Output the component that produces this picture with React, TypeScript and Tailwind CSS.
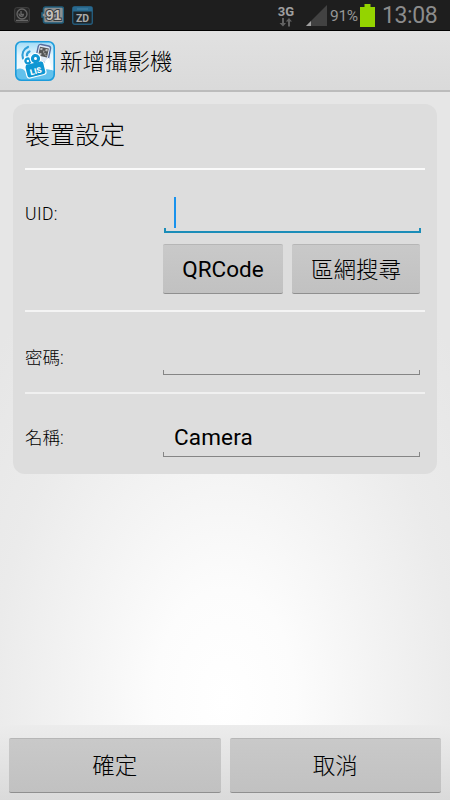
import type { ReactNode } from "react";

const ACTIONS = ["確定", "取消"];

function AppIcon() {
  return (
    <svg viewBox="0 0 40 40" className="h-10 w-10 shrink-0">
      <defs>
        <linearGradient id="sky" x1="0" y1="0" x2="0" y2="1">
          <stop offset="0" stopColor="#9fdbf7" />
          <stop offset="0.35" stopColor="#e6f6fd" />
          <stop offset="1" stopColor="#ffffff" />
        </linearGradient>
      </defs>
      <rect x="0.8" y="0.8" width="38.4" height="38.4" rx="5.5" fill="url(#sky)" />
      <path d="M1 29c3-2 6-2 9 1 5 4 8 4 13 1 5-3 11-4 16-1v5a4 4 0 0 1-4 4H5a4 4 0 0 1-4-4z" fill="#62c1ec" />
      <rect x="0.8" y="0.8" width="38.4" height="38.4" rx="5.5" fill="none" stroke="#1d9cdb" strokeWidth="1.6" />
      <g fill="none" stroke="#2f9fd8" strokeWidth="2.200" strokeLinecap="round">
        <path d="M8 17.500C6.500 12.500 8.500 8 13 6" />
        <path d="M12 15.500C11.500 13 12.500 11.500 14.500 10.500" />
      </g>
      <g transform="rotate(12 28 12)">
        <rect x="22" y="4" width="12.500" height="17" rx="2.500" fill="#dfe9f6" stroke="#586d9f" strokeWidth="1.400" />
        <rect x="23.800" y="6.500" width="9" height="9" fill="#555" />
        <path d="M24.500 7.300h2.200v2.200h-2.200zM29.800 7.300H32v2.200h-2.200zM24.500 12.500h2.200v2.200h-2.200zM28 9.500h1v2h-1zM29 12h2v1h-2zM31 13.500h1v1h-1z" fill="#bbb" />
      </g>
      <g transform="rotate(-14 20 28)">
        <g fill="#0f97d3" stroke="#fff" strokeWidth="1.200" strokeLinejoin="round">
          <path d="M29 26l6.500-5v11L29 29z" fill="#fff" />
          <rect x="10.500" y="22" width="19.500" height="13.500" rx="2.500" />
          <circle cx="15" cy="18.500" r="4.200" />
          <circle cx="23" cy="18" r="5.200" />
          <path d="M12 22h16v4H12z" stroke="none" />
        </g>
        <circle cx="15" cy="18.500" r="1.200" fill="#fff" />
        <circle cx="23" cy="18" r="1.500" fill="#fff" />
        <text x="20.300" y="33" textAnchor="middle" fontSize="8" fontWeight="900" fill="#fff" fontFamily="Roboto, sans-serif">
          LIS
        </text>
      </g>
    </svg>
  );
}

function StatusBar() {
  return (
    <div className="flex h-[31px] shrink-0 items-center border-b border-black bg-[#1e1e1e] pr-3 pl-[14px]">
      <svg viewBox="0 0 16 16" className="h-4 w-4">
        <rect x="0.700" y="0.700" width="14.600" height="14.600" rx="2" fill="#252525" stroke="#454545" />
        <circle cx="8" cy="7" r="5" fill="none" stroke="#686868" strokeWidth="1.300" />
        <path d="M7 4v3.500h3M5 6.500c0 3 3 3.500 4.500 2M2 13.500h12" fill="none" stroke="#666" strokeWidth="1.300" />
      </svg>
      <svg viewBox="0 0 23 18" className="ml-[11px] h-[18px] w-[23px]">
        <path d="M4.500 1h16a2 2 0 0 1 2 2v12a2 2 0 0 1-2 2h-16a2 2 0 0 1-2-2v-4H1V7h1.500V3a2 2 0 0 1 2-2z" fill="#8b8f91" stroke="#205e7c" strokeWidth="1.600" />
        <text x="12.500" y="13.800" textAnchor="middle" fontSize="14" fontWeight="700" fill="#c4bfba" stroke="#33383b" strokeWidth="1.800" paintOrder="stroke" fontFamily="Liberation Sans, sans-serif">
          91
        </text>
      </svg>
      <svg viewBox="0 0 21 19" className="ml-2 h-[19px] w-[21px]">
        <rect x="0.700" y="0.700" width="19.600" height="17.600" rx="2" fill="#1d2529" stroke="#245b7b" strokeWidth="1.400" />
        <path d="M1 1h19v4.500H1z" fill="#28698f" />
        <path d="M5 3h11" stroke="#4687a8" />
        <text x="10.500" y="15.500" textAnchor="middle" fontSize="10.500" fontWeight="700" fill="#aaa" fontFamily="Roboto, sans-serif">
          ZD
        </text>
      </svg>
      <div className="flex-1" />
      <div className="flex h-full w-[18px] flex-col items-center pt-[5px] text-[13px] leading-[13px] font-bold text-[#a0a0a0]">
        3G
        <svg viewBox="0 0 14 9" className="h-[9px] w-[14px] shrink-0">
          <path d="M3 0h2v5h2L4 8.500.500 5H3zM9 8.500h2v-5h2L10 0 6.800 3.500H9z" fill="#626262" />
        </svg>
      </div>
      <svg viewBox="0 0 21 21" className="ml-[11px] h-[21px] w-[21px]">
        <path d="M21 0v21H0z" fill="#424242" />
        <path d="M5 16v5H0z" fill="#a0a0a0" />
      </svg>
      <span className="ml-[3px] w-[29px] pt-px text-[15.500px] leading-5 tracking-[-0.300px] text-[#969696]">91%</span>
      <svg viewBox="0 0 15 23" className="ml-[1px] h-[23px] w-[15px]">
        <path d="M4.500 0h6v3H15v20H0V3h4.500z" fill="#94d400" />
      </svg>
      <span className="ml-[7px] w-[56px] pt-px text-[23px] leading-[30px] tracking-[-0.400px] text-[#8c8c8c]">13:08</span>
    </div>
  );
}

function Field({ value, focused }: { value?: string; focused?: boolean }) {
  const line = focused ? "border-[#1b8db8] border-b-[2px]" : "border-[#858585] border-b";
  return (
    <div className="w-[257px]">
      <div className={`flex h-[31px] items-center pt-[2px] text-[22.500px] tracking-[0.150px] ${focused ? "pl-[10px]" : "pl-[11px]"}`}>
        {focused && <span className="-mt-[2px] h-[31px] w-[2px] bg-[#1892ed]" />}
        {value}
      </div>
      <div className={`border-x ${focused ? "mb-px h-[5px] border-x-2" : "h-[5px]"} ${line}`} />
    </div>
  );
}

function Label({ children }: { children: ReactNode }) {
  return <span className="w-[138px] shrink-0 text-[17.500px] leading-6 font-light text-black">{children}</span>;
}

function Button({ children, className }: { children: ReactNode; className: string }) {
  return (
    <button
      className={`flex items-center justify-center rounded-[2px] border-t border-b border-t-[#b6b6b6] border-b-[#8f8f8f] bg-linear-to-b from-[#c9c9c9] to-[#c1c1c1] text-[22.500px] text-black ${className}`}
    >
      {children}
    </button>
  );
}

export default function App() {
  return (
    <div className="flex h-[800px] w-[450px] flex-col overflow-hidden bg-[#e6e6e6] font-['Roboto','Noto_Sans_CJK_TC',sans-serif] text-black">
      <StatusBar />
      <header className="flex h-[61px] shrink-0 items-center gap-[5px] border-b-2 border-[#bcbcbc] bg-linear-to-b from-[#e1e1e1] to-[#dadada] pl-[15px]">
        <AppIcon />
        <h1 className="pt-[2px] text-[22.500px] leading-8 font-light">新增攝影機</h1>
      </header>

      <main className="flex-1 bg-[radial-gradient(ellipse_320px_500px_at_50%_96%,#ffffff_0%,#fcfcfc_22%,#f4f4f4_45%,#ebebeb_72%,#e6e6e6_100%)] px-[13px] pt-3">
        <section className="h-[370px] rounded-xl bg-[#dddddd] px-3">
          <h2 className="flex h-[64px] items-center text-[25px] font-light">裝置設定</h2>
          <div className="h-[2px] bg-[#fafafa]" />
          <div className="h-[140px] pt-[27px]">
            <div className="flex items-start">
              <div className="pt-[5px] tracking-[0.400px]">
                <Label>UID:</Label>
              </div>
              <div className="ml-auto pr-1">
                <Field focused />
              </div>
            </div>
            <div className="mt-[10px] flex justify-end gap-[9px] pr-[5px]">
              <Button className="h-[50px] w-[120px] pt-[2px]">QRCode</Button>
              <Button className="h-[50px] w-[128px] pt-[3px] font-light">區網搜尋</Button>
            </div>
          </div>
          <div className="h-[2px] bg-[#f4f4f4]" />
          <div className="flex h-[80px] items-start pt-[27px]">
            <div className="pt-[7px]">
              <Label>密碼:</Label>
            </div>
            <div className="ml-auto pr-[5px]">
              <Field />
            </div>
          </div>
          <div className="h-[2px] bg-[#f0f0f0]" />
          <div className="flex items-start pt-[27px]">
            <div className="pt-[5px]">
              <Label>名稱:</Label>
            </div>
            <div className="ml-auto pr-[5px]">
              <Field value="Camera" />
            </div>
          </div>
        </section>
      </main>

      <footer className="flex h-[75px] shrink-0 gap-[9px] bg-linear-to-b from-[#ececec] to-[#dadada] px-[9px] pt-[13px]">
        {ACTIONS.map((label) => (
          <Button key={label} className="h-[55px] flex-1 pt-[3px] font-light">
            {label}
          </Button>
        ))}
      </footer>
    </div>
  );
}
